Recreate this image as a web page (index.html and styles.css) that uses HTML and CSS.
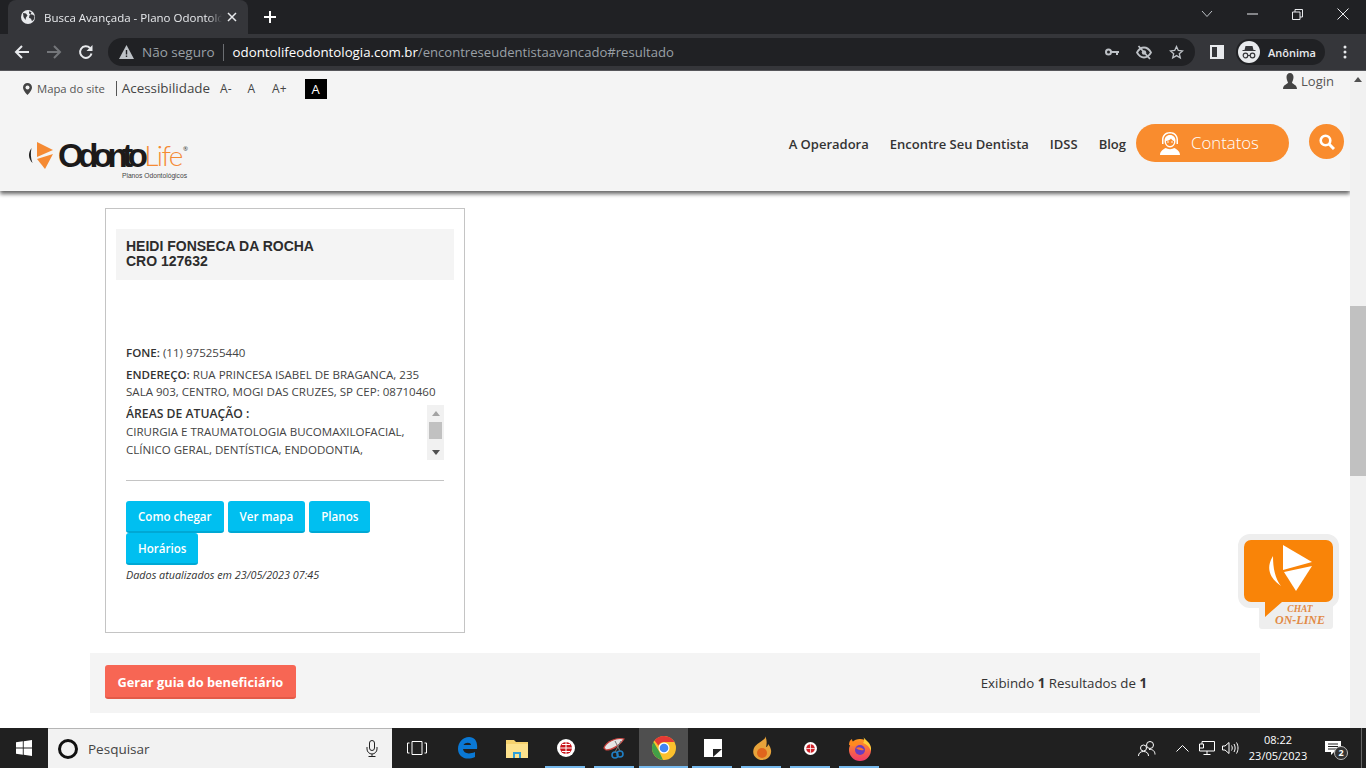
FILE: index.html
```html
<!DOCTYPE html>
<html lang="pt-BR">
<head>
<meta charset="utf-8">
<title>Busca Avançada - Plano Odontológico</title>
<link rel="stylesheet" href="styles.css">
</head>
<body>
<div class="app">
  <div class="tabstrip">
    <div class="tab">
      <svg class="globe" width="14" height="14" viewBox="0 0 14 14"><circle cx="7" cy="7" r="7" fill="#e8eaed"/><path d="M2 3l3 .5 1.500 2L5 7.500l-.5 2.500-2-3zM8 1.200l2.500 1-1 2 2.500.5 1.500 1.500-.5 3-2 2-1-2.500-2-1 .5-2.500 1-.5-1.500-1.500z" fill="#35363a"/></svg>
      <span class="tab-title">Busca Avançada - Plano Odontológico</span>
      <svg class="tab-x" width="10" height="10" viewBox="0 0 10 10"><path d="M1 1l8 8M9 1l-8 8" stroke="#e8eaed" stroke-width="1.500"/></svg>
    </div>
    <svg class="newtab" width="12" height="12" viewBox="0 0 12 12"><path d="M6 0v12M0 6h12" stroke="#fff" stroke-width="2"/></svg>
    <div class="window-controls">
      <svg width="12" height="8" viewBox="0 0 12 8"><path d="M1 1l5 5.500L11 1" fill="none" stroke="#bdc1c6"/></svg>
      <svg width="11" height="2" viewBox="0 0 11 2"><path d="M0 1h11" stroke="#e8eaed"/></svg>
      <svg width="11" height="11" viewBox="0 0 11 11"><path d="M.5 3h7.500v7.500H.5zM3 3V.5h7.500V8H8" fill="none" stroke="#e8eaed"/></svg>
      <svg width="12" height="12" viewBox="0 0 12 12"><path d="M.5.5l11 11M11.500.5l-11 11" stroke="#e8eaed"/></svg>
    </div>
  </div>

  <div class="toolbar">
    <svg class="nav-ico" width="16" height="16" viewBox="0 0 16 16"><path d="M15 8H2M8 2L2 8l6 6" fill="none" stroke="#e8eaed" stroke-width="2"/></svg>
    <svg class="nav-ico" width="16" height="16" viewBox="0 0 16 16"><path d="M1 8h13M8 2l6 6-6 6" fill="none" stroke="#74767a" stroke-width="2"/></svg>
    <svg class="nav-ico" width="16" height="16" viewBox="0 0 16 16"><path d="M13.500 9.500A5.800 5.800 0 1 1 12 4" fill="none" stroke="#e8eaed" stroke-width="2"/><path d="M14.500 1v6h-6z" fill="#e8eaed"/></svg>
    <div class="omnibox">
      <svg width="15" height="14" viewBox="0 0 15 14"><path d="M7.500 0L15 14H0z" fill="#bdc1c6"/><path d="M6.800 5h1.400v4.500H6.800zM6.800 10.500h1.400V12H6.800z" fill="#202124"/></svg>
      <span class="insecure">Não seguro</span>
      <span class="omni-sep"></span>
      <span class="url"><b>odontolifeodontologia.com.br</b>/encontreseudentistaavancado#resultado</span>
      <span class="omni-icons">
        <svg width="14" height="8" viewBox="0 0 14 8"><circle cx="3.500" cy="4" r="2.500" fill="none" stroke="#bdc1c6" stroke-width="2"/><path d="M6 3h8v2h-1v2h-2V5H6z" fill="#bdc1c6"/></svg>
        <svg width="16" height="15" viewBox="0 0 16 15"><path d="M1 7.500C3 4 5.500 2.500 8 2.500s5 1.500 7 5c-2 3.500-4.500 5-7 5s-5-1.500-7-5z" fill="none" stroke="#bdc1c6" stroke-width="1.800"/><circle cx="8" cy="7.500" r="2.200" fill="#bdc1c6"/><path d="M2.500 1l11.500 13" stroke="#bdc1c6" stroke-width="1.800"/></svg>
        <svg width="15" height="15" viewBox="0 0 15 15"><path d="M7.500 1.500l1.800 4 4.200.4-3.200 2.800 1 4.200-3.800-2.300-3.800 2.300 1-4.200L1.500 5.900l4.200-.4z" fill="none" stroke="#bdc1c6" stroke-width="1.300"/></svg>
      </span>
    </div>
    <svg class="side-ico" width="14" height="14" viewBox="0 0 14 14"><path d="M0 0h14v14H0z" fill="#e8eaed"/><path d="M2 2h5v10H2z" fill="#35363a"/></svg>
    <div class="incognito">
      <svg width="22" height="22" viewBox="0 0 22 22"><circle cx="11" cy="11" r="11" fill="#e8eaed"/><path d="M7.500 5h7l1 4h2v1h-13V9h2z" fill="#35363a"/><circle cx="7.500" cy="14.500" r="2.300" fill="none" stroke="#35363a" stroke-width="1.200"/><circle cx="14.500" cy="14.500" r="2.300" fill="none" stroke="#35363a" stroke-width="1.200"/><path d="M9.800 14.500h2.400" stroke="#35363a"/></svg>
      <span>Anônima</span>
    </div>
    <svg class="menu-ico" width="4" height="14" viewBox="0 0 4 14"><circle cx="2" cy="2" r="1.500" fill="#e8eaed"/><circle cx="2" cy="7" r="1.500" fill="#e8eaed"/><circle cx="2" cy="12" r="1.500" fill="#e8eaed"/></svg>
  </div>

  <div class="viewport">
    <div class="page">
      <header class="site-header">
        <div class="topbar">
          <svg class="pin" width="9" height="12" viewBox="0 0 9 12"><path d="M4.500 0a4.500 4.500 0 0 1 4.500 4.500C9 7.500 4.500 12 4.500 12S0 7.500 0 4.500A4.500 4.500 0 0 1 4.500 0z" fill="#444"/><circle cx="4.500" cy="4.500" r="2" fill="#f4f4f4"/></svg>
          <a class="sitemap">Mapa do site</a>
          <span class="access">Acessibilidade</span>
          <a class="size s1">A-</a>
          <a class="size s2">A</a>
          <a class="size s3">A+</a>
          <a class="contrast">A</a>
          <a class="login">
            <svg width="14" height="16" viewBox="0 0 14 16"><path d="M7 0c2.200 0 3.500 1.700 3.500 4S9.500 8.500 9 9.500c0 1.500 5 2 5 6.500H0c0-4.500 5-5 5-6.500C4.500 8.500 3.500 6.300 3.500 4S4.800 0 7 0z" fill="#444"/></svg>
            <span>Login</span>
          </a>
        </div>
        <div class="navrow">
          <div class="logo">
            <svg class="logo-mark" width="27" height="28" viewBox="0 0 27 28"><path d="M9 0l16 8-16 7z" fill="#f58a33"/><path d="M9 17l16-5-8 15z" fill="#f58a33"/><path d="M3.500 6C0 11 0 16 4.500 21 2.500 16 2.500 11 3.500 6z" fill="#222"/></svg>
            <span class="logo-odonto">Odonto</span><span class="logo-life">Life</span><span class="logo-r">®</span>
            <span class="logo-sub">Planos Odontológicos</span>
          </div>
          <nav class="nav">
            <a>A Operadora</a>
            <a>Encontre Seu Dentista</a>
            <a>IDSS</a>
            <a>Blog</a>
          </nav>
          <a class="contatos">
            <svg width="24" height="24" viewBox="0 0 24 24"><path d="M12 1c-5 0-8 3.500-8 8v4h1.500V9c0-4 2.500-6.500 6.500-6.500S18.500 5 18.500 9v4H20V9c0-4.500-3-8-8-8z" fill="#fff"/><path d="M12 4c-3.500 0-5.500 2.500-5.500 6 0 3.500 2.500 6.500 5.500 6.500s5.500-3 5.500-6.500c0-3.500-2-6-5.500-6z" fill="#fff"/><path d="M8 10c2 0 4-1 5-2.500 1 1.500 2 2.500 3 2.500v1c0 2.500-2 4-4 4s-4-1.500-4-4z" fill="#f98c2e"/><circle cx="10" cy="11" r=".8" fill="#fff"/><circle cx="14" cy="11" r=".8" fill="#fff"/><path d="M2 24c0-4 4-6.500 6-7 1.500 1.500 6.500 1.500 8 0 2 .5 6 3 6 7z" fill="#fff"/></svg>
            <span>Contatos</span>
          </a>
          <a class="search">
            <svg width="16" height="16" viewBox="0 0 16 16"><circle cx="6.500" cy="6.500" r="4.800" fill="none" stroke="#fff" stroke-width="2.600"/><path d="M10 10l5 5" stroke="#fff" stroke-width="3"/></svg>
          </a>
        </div>
      </header>

      <main class="main">
        <section class="card">
          <div class="name"><div>HEIDI FONSECA DA ROCHA</div><div>CRO 127632</div></div>
          <div class="details">
            <p class="phone"><b>FONE:</b> (11) 975255440</p>
            <p class="address"><b>ENDEREÇO:</b> RUA PRINCESA ISABEL DE BRAGANCA, 235 SALA 903, CENTRO, MOGI DAS CRUZES, SP CEP: 08710460</p>
            <div class="areas">
              <div class="areas-text">
                <b>ÁREAS DE ATUAÇÃO :</b><br>
                CIRURGIA E TRAUMATOLOGIA BUCOMAXILOFACIAL, CLÍNICO GERAL, DENTÍSTICA, ENDODONTIA,
              </div>
              <div class="mini-scroll">
                <svg width="8" height="5" viewBox="0 0 8 5"><path d="M4 0l4 5H0z" fill="#a3a3a3"/></svg>
                <span class="mini-thumb"></span>
                <svg width="8" height="5" viewBox="0 0 8 5"><path d="M0 0h8L4 5z" fill="#505050"/></svg>
              </div>
            </div>
            <hr class="rule">
            <div class="actions">
              <a class="btn">Como chegar</a>
              <a class="btn">Ver mapa</a>
              <a class="btn">Planos</a>
              <a class="btn">Horários</a>
            </div>
            <p class="updated">Dados atualizados em 23/05/2023 07:45</p>
          </div>
        </section>
        <div class="result-bar">
          <a class="guide">Gerar guia do beneficiário</a>
          <span class="count">Exibindo <b>1</b> Resultados de <b>1</b></span>
        </div>
      </main>

      <div class="chat">
        <div class="chat-label"><span class="chat-1">CHAT</span><span class="chat-2">ON-LINE</span></div>
        <svg class="chat-bubble" width="101" height="84" viewBox="0 0 101 84">
          <path d="M12 0h77a12 12 0 0 1 12 12v50a12 12 0 0 1-12 12H48L27 83V74H12A12 12 0 0 1 0 62V12A12 12 0 0 1 12 0z" fill="#eee"/>
          <path d="M13 6h75a7 7 0 0 1 7 7v48a7 7 0 0 1-7 7H44L27 83V68H13a7 7 0 0 1-7-7V13a7 7 0 0 1 7-7z" fill="#f98408"/>
          <path d="M45 11l29 17-29 8z" fill="#fff"/><path d="M46 38l28-6-16 25z" fill="#fff"/><path d="M35 22c-6 10-6 20 8 30-6-8-8-18-8-30z" fill="#fff"/>
        </svg>
      </div>
    </div>
    <div class="scrollbar">
      <svg width="8" height="5" viewBox="0 0 8 5"><path d="M4 0l4 5H0z" fill="#505050"/></svg>
      <span class="thumb"></span>
    </div>
  </div>

  <footer class="taskbar">
    <div class="start"><svg width="16" height="16" viewBox="0 0 16 16"><path d="M0 2.300l6.800-1v6.200H0zM7.700 1.200L16 0v7.500H7.700zM0 8.500h6.800v6.200l-6.800-1zM7.700 8.500H16V16l-8.300-1.200z" fill="#fff"/></svg></div>
    <div class="task-search">
      <span class="cortana"></span>
      <span class="task-placeholder">Pesquisar</span>
      <svg class="mic" width="12" height="17" viewBox="0 0 12 17"><rect x="3.500" y=".5" width="5" height="10" rx="2.500" fill="none" stroke="#222"/><path d="M1 7v2a5 5 0 0 0 10 0V7M6 14v2.500M2.500 16.500h7" fill="none" stroke="#222"/></svg>
    </div>
    <div class="task-icons">
      <div class="ti"><svg width="20" height="14" viewBox="0 0 20 14"><path d="M5 .5h10v13H5zM2.500 2H.5v10h2M17.500 2h2v10h-2" fill="none" stroke="#fff"/></svg></div>
      <div class="ti"><svg width="21" height="22" viewBox="0 0 21 22"><path d="M20 12H6c.5 4 5 6 12 3v5c-9 4-17 0-17-8C1 5 6 0 12 0c6 0 9 5 8 12zm-6-4c0-3-6-3-7.500 0z" fill="#0a78d4"/></svg></div>
      <div class="ti"><svg width="22" height="19" viewBox="0 0 22 19"><path d="M0 1h8l2 2h12v16H0z" fill="#f6d26e"/><path d="M0 5h22v14H0z" fill="#fde28d"/><path d="M7 13h8v6H7z" fill="#2e9fd8"/><path d="M9 15h4v4H9z" fill="#fde28d"/></svg></div>
      <div class="ti on"><svg width="20" height="20" viewBox="0 0 20 20"><circle cx="10" cy="10" r="9" fill="#fff"/><circle cx="10" cy="10" r="6" fill="#c9161d"/><path d="M4 10h12M10 4v12M6 6.500h8M6 13.500h8" stroke="#fff"/></svg></div>
      <div class="ti on"><svg width="24" height="22" viewBox="0 0 24 22"><path d="M1 11C3 5 13 0 21 2c-3 5-11 11-18 11z" fill="#e6e6e6" stroke="#c9413d" stroke-width="1.200"/><circle cx="17" cy="17" r="3" fill="none" stroke="#1f7fc4" stroke-width="1.600"/><circle cx="12" cy="18" r="3" fill="none" stroke="#1f7fc4" stroke-width="1.600"/><path d="M17 14L12 4M12 15l6-11" stroke="#777"/></svg></div>
      <div class="ti active on"><svg width="24" height="24" viewBox="0 0 24 24"><circle cx="12" cy="12" r="12" fill="#fbc02d"/><path d="M12 0a12 12 0 0 1 10.400 6H12a6 6 0 0 0-5.600 3.800L2.500 4.500A12 12 0 0 1 12 0z" fill="#e53935"/><path d="M1.600 6l5.200 9 .2.200L11 24A12 12 0 0 1 1.600 6z" fill="#43a047"/><circle cx="12" cy="12" r="5.500" fill="#fff"/><circle cx="12" cy="12" r="4.300" fill="#4285f4"/></svg></div>
      <div class="ti on"><svg width="18" height="18" viewBox="0 0 18 18"><path d="M0 0h18v18H0z" fill="#fff"/><path d="M9 18V10H18z" fill="#222"/></svg></div>
      <div class="ti on"><svg width="20" height="24" viewBox="0 0 20 24"><path d="M13 0c2 4-8 6-11 12-3 7 3 12 8 12s10-4 9-10c-.5-3-2-5-3-6 0 2-1 3-2 3 1-3 1-8-1-11z" fill="#e8a33a"/><ellipse cx="10" cy="17" rx="5" ry="5" fill="#e0651c"/></svg></div>
      <div class="ti on"><svg width="13" height="13" viewBox="0 0 12 12"><circle cx="6" cy="6" r="6" fill="#fff"/><circle cx="6" cy="6" r="4" fill="#d0242b"/><path d="M2 6h8M6 2v8" stroke="#fff" stroke-width=".7"/></svg></div>
      <div class="ti on"><svg width="24" height="25" viewBox="0 0 24 25"><defs><linearGradient id="ffx" x1="0" y1="0" x2="0" y2="1"><stop offset="0" stop-color="#ff9a1f"/><stop offset="1" stop-color="#f0386b"/></linearGradient></defs><circle cx="12" cy="14" r="11" fill="url(#ffx)"/><path d="M15 0c1 4 9 6 8 15-2-5-5-7-8-8 2-2 1-5 0-7z" fill="#ffcf3a"/><path d="M1 9c0-3 1-5 3-6 0 2 1 3 2 3 2-1 5-1 7 1-3 0-5 1-6 3-2 0-4 0-6-1z" fill="#ff8a1f"/><circle cx="12" cy="14" r="5" fill="#6a3bc0"/><path d="M8 12c3-1.500 6-.5 8 2-3 .5-6 0-8-2z" fill="#f9742a"/></svg></div>
    </div>
    <div class="tray">
      <svg class="t-people" width="18" height="17" viewBox="0 0 18 17"><circle cx="12" cy="5" r="3.500" fill="none" stroke="#fff"/><circle cx="5.500" cy="8" r="3" fill="none" stroke="#fff"/><path d="M.5 16c0-3 2-4.500 5-4.500s5 1.500 5 4.500M11 9.500c3.500-.5 6 1.500 6 5" fill="none" stroke="#fff"/></svg>
      <svg class="t-chev" width="13" height="7" viewBox="0 0 13 7"><path d="M.5 6.500l6-6 6 6" fill="none" stroke="#fff"/></svg>
      <svg class="t-net" width="16" height="14" viewBox="0 0 16 14"><path d="M3 3V.5h12.500V10H.5V3h4v4h-4M8 10v3M4.500 13.500h7" fill="none" stroke="#fff"/></svg>
      <svg class="t-vol" width="17" height="14" viewBox="0 0 17 14"><path d="M.5 5v4h2.500l4 3.500v-11L3 5zM9.500 4.500c1 1.500 1 3.500 0 5M12 3c1.500 2.500 1.500 5.500 0 8M14.500 1.500c2 3.500 2 7.500 0 11" fill="none" stroke="#fff"/></svg>
      <div class="clock"><span>08:22</span><span>23/05/2023</span></div>
      <div class="notif">
        <svg width="16" height="14" viewBox="0 0 16 14"><path d="M0 0h16v11H9l-3 3v-3H0z" fill="#fff"/><path d="M3 3h10M3 5.500h10M3 8h10" stroke="#222"/></svg>
        <span class="badge">2</span>
      </div>
      <span class="show-desktop"></span>
    </div>
  </footer>
</div>
</body>
</html>
```

FILE: styles.css
```css
* { box-sizing: border-box; }
html, body { margin: 0; padding: 0; height: 100%; overflow: hidden; }
body { font-family: "Open Sans", "Noto Sans", sans-serif; color: #333; background: #fff; }
a { color: inherit; text-decoration: none; }
p { margin: 0; }
svg { display: block; flex: none; }

.app { width: 1366px; height: 768px; display: flex; flex-direction: column; }

/* browser chrome */
.tabstrip { height: 34px; background: #202124; display: flex; align-items: flex-end; padding-left: 8px; flex: none; }
.tab { width: 240px; height: 34px; background: #35363a; border-radius: 8px 8px 0 0; display: flex; align-items: center; padding: 0 11px 0 13px; }
.tab-title { margin-left: 9px; width: 178px; font-size: 11.500px; color: #e8eaed; white-space: nowrap; overflow: hidden; -webkit-mask-image: linear-gradient(90deg, #000 92%, transparent); mask-image: linear-gradient(90deg, #000 92%, transparent); }
.tab-x { margin-left: 5px; }
.newtab { margin: 0 0 11px 16px; }
.window-controls { margin-left: auto; height: 34px; display: flex; align-items: center; gap: 34px; padding: 0 17px 6px 0; flex: none; }

.toolbar { height: 37px; background: #35363a; border-bottom: 1px solid #55565a; display: flex; align-items: center; padding: 0 13px 0 14px; flex: none; }
.nav-ico { margin-right: 16px; }
.nav-ico:nth-child(3) { margin-right: 14px; }
.omnibox { width: 1087px; height: 28px; background: #202124; border-radius: 14px; display: flex; align-items: center; padding: 0 11px 0 11px; }
.insecure { margin-left: 8px; font-size: 13.500px; color: #9aa0a6; }
.omni-sep { width: 1px; height: 17px; background: #6b6e72; margin: 0 9px 0 8px; }
.url { font-size: 13.100px; color: #9aa0a6; white-space: nowrap; }
.url b { font-size: 13.300px; font-weight: 400; color: #fff; }
.omni-icons { margin-left: auto; display: flex; align-items: center; gap: 17px; }
.side-ico { margin-left: 15px; }
.incognito { margin-left: 12px; width: 89px; height: 26px; background: #202124; border-radius: 13px; display: flex; align-items: center; padding-left: 2px; }
.incognito span { margin-left: 8px; font-size: 11px; font-weight: 600; color: #e8eaed; }
.menu-ico { margin-left: 18px; }

.viewport { flex: 1; display: flex; min-height: 0; }
.page { flex: 1; position: relative; overflow: hidden; background: #fff; min-width: 0; }

/* site header */
.site-header { height: 120px; background: #f4f4f4; box-shadow: 0 3px 4px rgba(0,0,0,.6); position: relative; }
.topbar { height: 35px; display: flex; align-items: center; padding: 0 16px 0 23px; }
.sitemap { margin-left: 5px; font-size: 11.300px; color: #555; }
.access { margin-left: 11px; padding-left: 5px; border-left: 1px solid #555; font-size: 13.400px; line-height: 15px; color: #444; }
.size { font-size: 12px; color: #444; }
.s1 { margin-left: 10px; }
.s2 { margin-left: 16px; }
.s3 { margin-left: 17px; }
.contrast { margin-left: 18px; width: 22px; height: 20px; background: #000; color: #fff; font-size: 13px; display: flex; align-items: center; justify-content: center; }
.login { margin-left: auto; margin-top: -15px; display: flex; align-items: center; gap: 4px; font-size: 13px; color: #555; }

.navrow { height: 75px; display: flex; align-items: center; padding: 0 6px 0 28px; }
.logo { position: relative; width: 159px; height: 38px; display: flex; align-items: flex-start; white-space: nowrap; margin-top: 35px; }
.logo-mark { margin-right: 3px; }
.logo-odonto { font-family: "Liberation Sans", sans-serif; font-size: 33px; line-height: 28px; font-weight: 700; letter-spacing: -5.500px; color: #1c1a1a; }
.logo-life { font-family: "Lato", sans-serif; font-size: 28px; line-height: 27px; margin-left: 2px; color: #f58a33; font-weight: 300; letter-spacing: -1.600px; }
.logo-r { font-size: 6px; line-height: 10px; color: #333; margin-top: 2px; margin-left: 1px; }
.logo-sub { position: absolute; right: 0; top: 30px; font-family: "Liberation Sans", sans-serif; font-size: 6.700px; font-weight: 400; color: #444; }
.nav { margin-left: auto; margin-top: 1px; display: flex; gap: 21px; font-size: 13px; font-weight: 600; color: #333; }
.contatos { margin-left: 10px; margin-top: -2px; width: 153px; height: 38px; border-radius: 19px; background: #f98c2e; color: #fff; display: flex; align-items: center; padding-left: 22px; gap: 9px; font-size: 16.800px; font-weight: 300; }
.search { margin-left: 20px; margin-top: -4px; width: 35px; height: 35px; border-radius: 50%; background: #f98c2e; display: flex; align-items: center; justify-content: center; }

/* main content */
.main { padding: 17px 90px 0; }
.card { margin-left: 15px; width: 360px; height: 425px; border: 1px solid #c4c4c4; padding: 20px 10px 0; }
.name { height: 51px; background: #f4f4f4; padding: 10px 10px 0; font-family: "Liberation Sans", sans-serif; font-size: 14px; font-weight: 700; line-height: 15px; color: #2c2c2c; }
.details { padding: 64px 10px 0; font-size: 11.550px; line-height: 18px; color: #444; }
.details b { color: #333; font-weight: 600; }
.address { margin-top: 4px; line-height: 17px; }
.areas { margin-top: 5px; height: 55px; position: relative; overflow: hidden; padding-right: 20px; }
.areas-text { height: 55px; overflow: hidden; }
.details .areas-text b { font-size: 12.200px; }
.mini-scroll { position: absolute; right: 0; top: 0; bottom: 0; width: 17px; background: #f1f1f1; display: flex; flex-direction: column; align-items: center; padding-top: 6px; }
.mini-thumb { width: 13px; height: 17px; background: #c1c1c1; margin-top: 6px; }
.mini-scroll svg:last-child { margin-top: auto; margin-bottom: 5px; }
.rule { border: 0; border-top: 1px solid #c4c4c4; margin: 20px 0 20px; }
.actions { display: flex; flex-wrap: wrap; column-gap: 4px; }
.btn { height: 32px; padding: 0 12px; background: #00bff0; border-bottom: 2px solid #00a8d4; border-radius: 3px; color: #fff; font-size: 11.600px; font-weight: 600; line-height: 31px; }
.updated { margin-top: 1px; font-size: 10.800px; font-style: italic; color: #333; }
.result-bar { margin-top: 20px; height: 60px; background: #f4f4f4; display: flex; align-items: center; justify-content: space-between; padding: 0 113px 0 15px; }
.guide { height: 34px; margin-bottom: 2px; padding: 0 12.500px; background: #f76654; border-bottom: 2px solid #e35a48; border-radius: 3px; color: #fff; font-size: 12.800px; font-weight: 700; line-height: 35px; }
.count { font-size: 13.300px; color: #333; }
.count b { font-weight: 700; }

/* chat widget */
.chat { position: absolute; left: 1238px; top: 463px; width: 101px; height: 96px; }
.chat-bubble { position: relative; z-index: 1; }
.chat-label { position: absolute; left: 21px; top: 72px; width: 74px; height: 23px; background: #eee; border-radius: 0 0 3px 3px; display: flex; flex-direction: column; align-items: center; font-family: "Liberation Serif", serif; font-style: italic; font-weight: 700; color: #e28a45; padding-left: 8px; }
.chat-1 { position: relative; z-index: 2; margin-top: -2px; font-size: 9.500px; line-height: 10px; }
.chat-2 { position: relative; z-index: 2; font-size: 12px; line-height: 12px; }

/* page scrollbar */
.scrollbar { width: 16px; flex: none; background: #f1f1f1; display: flex; flex-direction: column; align-items: center; padding-top: 6px; }
.thumb { width: 16px; height: 170px; background: #c1c1c1; margin-top: 224px; }

/* taskbar */
.taskbar { height: 40px; flex: none; background: #202020; display: flex; }
.start { width: 48px; display: flex; align-items: center; justify-content: center; }
.task-search { width: 344px; background: #f2f2f2; border-top: 1px solid #b5b5b5; display: flex; align-items: center; padding-left: 10px; }
.cortana { width: 20px; height: 20px; border-radius: 50%; border: 3px solid #111; box-sizing: border-box; }
.task-placeholder { margin-left: 10px; font-size: 13.500px; color: #444; }
.mic { margin-left: auto; margin-right: 14px; }
.task-icons { display: flex; }
.ti { width: 49px; height: 40px; display: flex; align-items: center; justify-content: center; position: relative; }
.ti:first-child { margin-right: 2px; }
.ti.on::after { content: ""; position: absolute; left: 4px; right: 5px; bottom: 0; height: 2px; background: #76b9ed; }
.ti.active { background: #4f4f4f; }
.ti.active::after { left: 0; right: 0; }
.tray { margin-left: auto; display: flex; align-items: center; }
.t-people { margin-right: 20px; }
.t-chev { margin-right: 10px; }
.t-net { margin-right: 7px; }
.t-vol { margin-right: 1px; }
.clock { width: 76px; display: flex; flex-direction: column; align-items: center; font-size: 11px; line-height: 16px; color: #fff; }
.notif { position: relative; width: 32px; margin-left: 3px; padding-left: 6px; }
.badge { position: absolute; left: 15px; top: 5px; width: 14px; height: 14px; border-radius: 50%; background: #333; border: 1px solid #bbb; color: #fff; font-size: 9px; font-weight: 700; line-height: 12px; text-align: center; }
.show-desktop { width: 1px; height: 40px; background: #666; margin: 0 4px 0 10px; }
```
